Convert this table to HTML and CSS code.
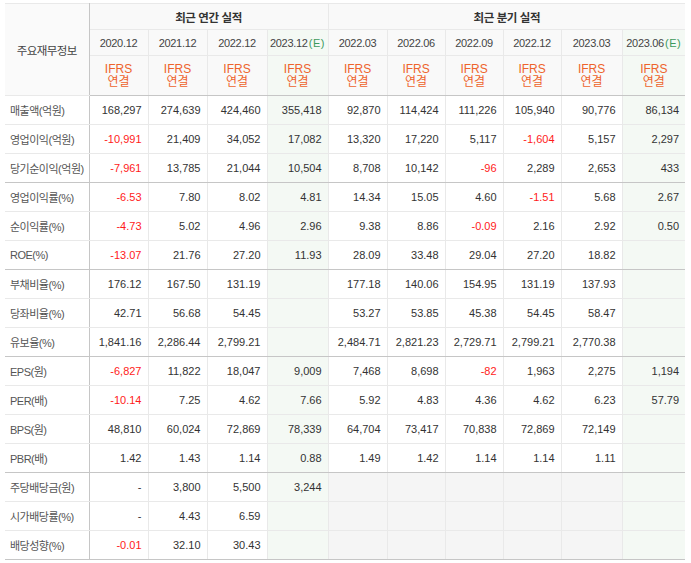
FILE: index.html
```html
<!DOCTYPE html>
<html lang="ko">
<head>
<meta charset="utf-8">
<title>주요재무정보</title>
<link rel="stylesheet" href="styles.css">
</head>
<body>
<table class="fin">
  <colgroup>
    <col class="c-label">
    <col class="c59"><col class="c59"><col class="c60"><col class="c61">
    <col class="c59"><col class="c58"><col class="c58"><col class="c58"><col class="c61"><col class="c63">
  </colgroup>
  <thead>
    <tr class="h1">
      <th rowspan="3" class="title">주요재무정보</th>
      <th colspan="4" class="grp sep">최근 연간 실적</th>
      <th colspan="6" class="grp">최근 분기 실적</th>
    </tr>
    <tr class="h2">
      <th>2020.12</th><th>2021.12</th><th>2022.12</th><th class="est">2023.12<span class="e">(E)</span></th>
      <th class="q1">2022.03</th><th>2022.06</th><th>2022.09</th><th>2022.12</th><th>2023.03</th><th class="est">2023.06<span class="e">(E)</span></th>
    </tr>
    <tr class="h3">
      <th><span class="ifrs">IFRS<br>연결</span></th>
      <th><span class="ifrs">IFRS<br>연결</span></th>
      <th><span class="ifrs">IFRS<br>연결</span></th>
      <th class="est"><span class="ifrs">IFRS<br>연결</span></th>
      <th class="q1"><span class="ifrs">IFRS<br>연결</span></th>
      <th><span class="ifrs">IFRS<br>연결</span></th>
      <th><span class="ifrs">IFRS<br>연결</span></th>
      <th><span class="ifrs">IFRS<br>연결</span></th>
      <th><span class="ifrs">IFRS<br>연결</span></th>
      <th class="est"><span class="ifrs">IFRS<br>연결</span></th>
    </tr>
  </thead>
  <tbody>
    <tr><th>매출액(억원)</th><td>168,297</td><td>274,639</td><td>424,460</td><td class="est">355,418</td><td class="q1">92,870</td><td>114,424</td><td>111,226</td><td>105,940</td><td>90,776</td><td class="est">86,134</td></tr>
    <tr><th>영업이익(억원)</th><td class="neg">-10,991</td><td>21,409</td><td>34,052</td><td class="est">17,082</td><td class="q1">13,320</td><td>17,220</td><td>5,117</td><td class="neg">-1,604</td><td>5,157</td><td class="est">2,297</td></tr>
    <tr class="end"><th>당기순이익(억원)</th><td class="neg">-7,961</td><td>13,785</td><td>21,044</td><td class="est">10,504</td><td class="q1">8,708</td><td>10,142</td><td class="neg">-96</td><td>2,289</td><td>2,653</td><td class="est">433</td></tr>

    <tr><th>영업이익률(%)</th><td class="neg">-6.53</td><td>7.80</td><td>8.02</td><td class="est">4.81</td><td class="q1">14.34</td><td>15.05</td><td>4.60</td><td class="neg">-1.51</td><td>5.68</td><td class="est">2.67</td></tr>
    <tr><th>순이익률(%)</th><td class="neg">-4.73</td><td>5.02</td><td>4.96</td><td class="est">2.96</td><td class="q1">9.38</td><td>8.86</td><td class="neg">-0.09</td><td>2.16</td><td>2.92</td><td class="est">0.50</td></tr>
    <tr class="end"><th>ROE(%)</th><td class="neg">-13.07</td><td>21.76</td><td>27.20</td><td class="est">11.93</td><td class="q1">28.09</td><td>33.48</td><td>29.04</td><td>27.20</td><td>18.82</td><td class="est"></td></tr>

    <tr><th>부채비율(%)</th><td>176.12</td><td>167.50</td><td>131.19</td><td class="est"></td><td class="q1">177.18</td><td>140.06</td><td>154.95</td><td>131.19</td><td>137.93</td><td class="est"></td></tr>
    <tr><th>당좌비율(%)</th><td>42.71</td><td>56.68</td><td>54.45</td><td class="est"></td><td class="q1">53.27</td><td>53.85</td><td>45.38</td><td>54.45</td><td>58.47</td><td class="est"></td></tr>
    <tr class="end"><th>유보율(%)</th><td>1,841.16</td><td>2,286.44</td><td>2,799.21</td><td class="est"></td><td class="q1">2,484.71</td><td>2,821.23</td><td>2,729.71</td><td>2,799.21</td><td>2,770.38</td><td class="est"></td></tr>

    <tr><th>EPS(원)</th><td class="neg">-6,827</td><td>11,822</td><td>18,047</td><td class="est">9,009</td><td class="q1">7,468</td><td>8,698</td><td class="neg">-82</td><td>1,963</td><td>2,275</td><td class="est">1,194</td></tr>
    <tr><th>PER(배)</th><td class="neg">-10.14</td><td>7.25</td><td>4.62</td><td class="est">7.66</td><td class="q1">5.92</td><td>4.83</td><td>4.36</td><td>4.62</td><td>6.23</td><td class="est">57.79</td></tr>
    <tr><th>BPS(원)</th><td>48,810</td><td>60,024</td><td>72,869</td><td class="est">78,339</td><td class="q1">64,704</td><td>73,417</td><td>70,838</td><td>72,869</td><td>72,149</td><td class="est"></td></tr>
    <tr class="end"><th>PBR(배)</th><td>1.42</td><td>1.43</td><td>1.14</td><td class="est">0.88</td><td class="q1">1.49</td><td>1.42</td><td>1.14</td><td>1.14</td><td>1.11</td><td class="est"></td></tr>

    <tr><th>주당배당금(원)</th><td>-</td><td>3,800</td><td>5,500</td><td class="est">3,244</td><td class="q1 na"></td><td class="na"></td><td class="na"></td><td class="na"></td><td class="na"></td><td class="est"></td></tr>
    <tr><th>시가배당률(%)</th><td>-</td><td>4.43</td><td>6.59</td><td class="est"></td><td class="q1 na"></td><td class="na"></td><td class="na"></td><td class="na"></td><td class="na"></td><td class="est"></td></tr>
    <tr class="end"><th>배당성향(%)</th><td class="neg">-0.01</td><td>32.10</td><td>30.43</td><td class="est"></td><td class="q1 na"></td><td class="na"></td><td class="na"></td><td class="na"></td><td class="na"></td><td class="est"></td></tr>
  </tbody>
</table>
</body>
</html>
```

FILE: styles.css
```css
html, body {
  margin: 0;
  padding: 0;
  background: #ffffff;
}

body {
  padding: 3px 6px 0 5px;
  font-family: "Liberation Sans", "Noto Sans CJK KR", sans-serif;
  font-size: 11px;
  color: #333333;
}

.fin {
  border-collapse: collapse;
  table-layout: fixed;
  width: 680px;
  border-top: 1px solid #c6c6c6;
  border-bottom: 1px solid #c6c6c6;
}

.c-label { width: 84px; }
.c58 { width: 58px; }
.c59 { width: 59px; }
.c60 { width: 60px; }
.c61 { width: 61px; }
.c63 { width: 63px; }

.fin th,
.fin td {
  padding: 0;
  border: 1px solid #e9e9e9;
  font-weight: normal;
  white-space: nowrap;
  overflow: hidden;
}

.fin th:first-child {
  border-left: 0;
}

.fin td:last-child,
.fin th:last-child {
  border-right: 0;
}

.fin thead th {
  background: #f9f9f9;
  text-align: center;
  color: #333333;
  letter-spacing: -0.3px;
}

.fin thead th.title {
  color: #444444;
  font-size: 11.5px;
  letter-spacing: -0.6px;
  border-right: 1px solid #c6c6c6;
  background: #fafafa;
}

.fin .h1 th { height: 25px; }
.fin .h2 th { height: 25px; }
.fin .h3 th {
  height: 39px;
  border-bottom: 1px solid #c6c6c6;
}

.fin th.grp {
  font-weight: bold;
  font-size: 11.5px;
  color: #333333;
  letter-spacing: -0.4px;
}

.fin th.sep,
.fin .q1 {
  border-left: 1px solid #c6c6c6;
}

.fin .h2 th {
  font-size: 11px;
  color: #444444;
}

.e {
  color: #3d9a5c;
  letter-spacing: 0.6px;
  margin-left: 1px;
}

.ifrs {
  display: inline-block;
  color: #ee642c;
  font-size: 12px;
  line-height: 13px;
  letter-spacing: 0;
}

.fin tbody th {
  text-align: left;
  padding-left: 5px;
  color: #555555;
  background: #ffffff;
  letter-spacing: -0.5px;
  border-right: 1px solid #c6c6c6;
  height: 28px;
}

.fin tbody td {
  text-align: right;
  padding-right: 6px;
  height: 28px;
  background: #ffffff;
  color: #333333;
}

.fin tbody tr.end th,
.fin tbody tr.end td {
  border-bottom: 1px solid #c6c6c6;
}

.fin .est,
.fin tbody td.est,
.fin thead th.est {
  background: #f4f9f4;
}

.fin tbody td.na {
  background: #f5f5f5;
}

.fin tbody td.neg {
  color: #ff1a1a;
}
```
